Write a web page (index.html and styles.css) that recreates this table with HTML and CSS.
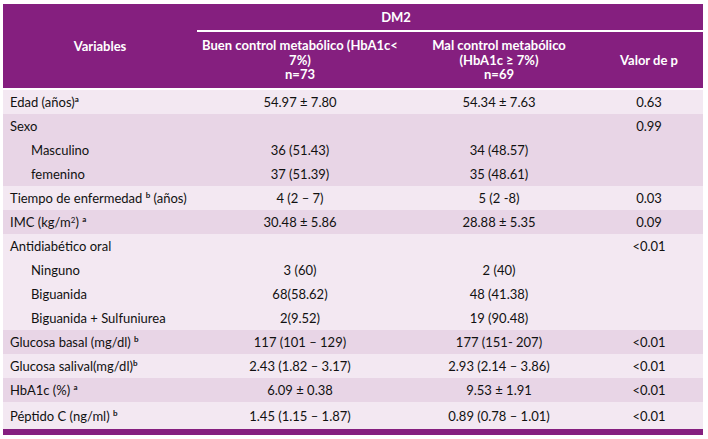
FILE: index.html
```html
<!DOCTYPE html>
<html lang="es">
<head>
<meta charset="utf-8">
<link rel="stylesheet" href="styles.css">
</head>
<body>
<div class="wrap">
<table class="tbl">
  <colgroup>
    <col class="c1"><col class="c2"><col class="c3"><col class="c4">
  </colgroup>
  <thead>
    <tr class="h1">
      <th rowspan="2" class="hvar">Variables</th>
      <th colspan="2" class="hdm">DM2</th>
      <th class="hempty"></th>
    </tr>
    <tr class="h2">
      <th>Buen control metabólico (HbA1c&lt;<br>7%)<br>n=73</th>
      <th>Mal control metabólico<br>(HbA1c ≥ 7%)<br>n=69</th>
      <th>Valor de p</th>
    </tr>
  </thead>
  <tbody>
    <tr class="lt"><td>Edad (años)<sup>a</sup></td><td>54.97 ± 7.80</td><td>54.34 ± 7.63</td><td>0.63</td></tr>
    <tr class="dk"><td>Sexo</td><td></td><td></td><td>0.99</td></tr>
    <tr class="dk"><td class="ind">Masculino</td><td>36 (51.43)</td><td>34 (48.57)</td><td></td></tr>
    <tr class="dk"><td class="ind">femenino</td><td>37 (51.39)</td><td>35 (48.61)</td><td></td></tr>
    <tr class="lt"><td>Tiempo de enfermedad <sup>b</sup> (años)</td><td>4 (2 – 7)</td><td>5 (2 -8)</td><td>0.03</td></tr>
    <tr class="dk"><td>IMC (kg/m<sup class="sq">2</sup>) <sup>a</sup></td><td>30.48 ± 5.86</td><td>28.88 ± 5.35</td><td>0.09</td></tr>
    <tr class="lt"><td>Antidiabético oral</td><td></td><td></td><td>&lt;0.01</td></tr>
    <tr class="lt"><td class="ind">Ninguno</td><td>3 (60)</td><td>2 (40)</td><td></td></tr>
    <tr class="lt"><td class="ind">Biguanida</td><td>68(58.62)</td><td>48 (41.38)</td><td></td></tr>
    <tr class="lt"><td class="ind">Biguanida + Sulfuniurea</td><td>2(9.52)</td><td>19 (90.48)</td><td></td></tr>
    <tr class="dk"><td>Glucosa basal (mg/dl) <sup>b</sup></td><td>117 (101 – 129)</td><td>177 (151- 207)</td><td>&lt;0.01</td></tr>
    <tr class="lt"><td>Glucosa salival(mg/dl)<sup>b</sup></td><td>2.43 (1.82 – 3.17)</td><td>2.93 (2.14 – 3.86)</td><td>&lt;0.01</td></tr>
    <tr class="dk"><td>HbA1c (%) <sup>a</sup></td><td>6.09 ± 0.38</td><td>9.53 ± 1.91</td><td>&lt;0.01</td></tr>
    <tr class="lt last"><td>Péptido C (ng/ml) <sup>b</sup></td><td>1.45 (1.15 – 1.87)</td><td>0.89 (0.78 – 1.01)</td><td>&lt;0.01</td></tr>
  </tbody>
</table>
</div>
</body>
</html>
```

FILE: styles.css
```css
html, body {
  margin: 0;
  padding: 0;
  background: #ffffff;
}

.wrap {
  padding: 4px 5px 0 3px;
}

.tbl {
  width: 700px;
  border-collapse: collapse;
  table-layout: fixed;
  font-family: Lato, "Open Sans", sans-serif;
  font-size: 13px;
  color: #111111;
}

.c1 { width: 194px; }
.c2 { width: 206px; }
.c3 { width: 192px; }
.c4 { width: 108px; }

.tbl th {
  background: #851f7f;
  color: #ffffff;
  font-weight: 700;
  text-align: center;
  padding: 0;
  line-height: 14.5px;
}

.h1 th {
  height: 26px;
}

.hdm,
.hempty,
.hvar {
  border-bottom: 2px solid #ffffff;
}

.h2 th {
  height: 56px;
  border-bottom: 2px solid #ffffff;
}

.tbl td {
  height: 24px;
  padding: 0;
  text-align: center;
  vertical-align: middle;
  line-height: 16px;
  white-space: nowrap;
}

.tbl td:first-child {
  text-align: left;
  padding-left: 7px;
}

.tbl td.ind {
  padding-left: 28px;
}

.lt td { background: #f3e8f2; }
.dk td { background: #e8d5e6; }

.last td {
  height: 27px;
  border-bottom: 6px solid #851f7f;
}

sup {
  font-size: 8px;
  font-weight: 700;
  line-height: 0;
  vertical-align: 5px;
}

sup.sq {
  font-weight: 400;
  vertical-align: 4px;
}
```
